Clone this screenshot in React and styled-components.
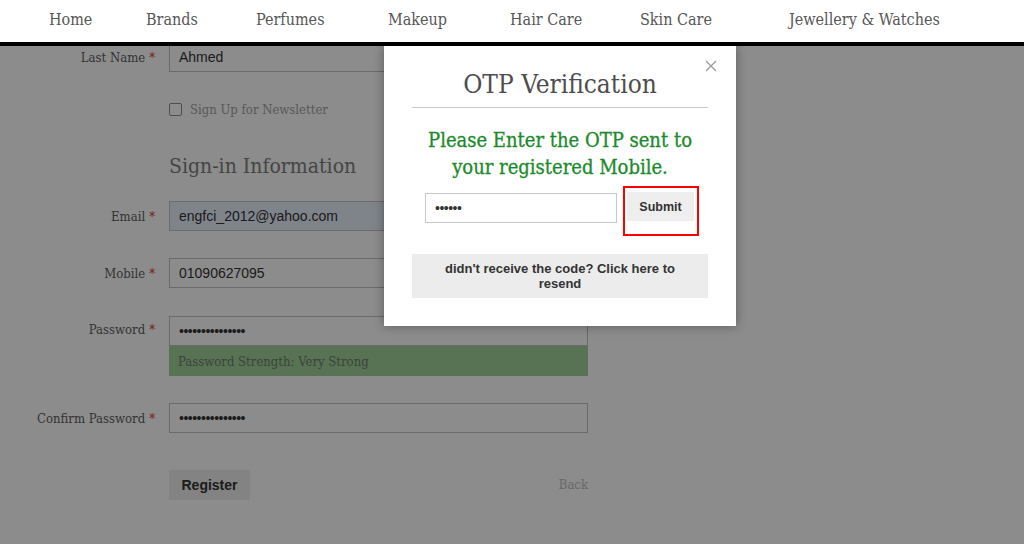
import React from "react";
import styled, { createGlobalStyle } from "styled-components";

const GlobalStyle = createGlobalStyle`
  html, body {
    margin: 0;
    padding: 0;
    background: #ffffff;
    overflow: hidden;
  }
  * {
    box-sizing: border-box;
  }
`;

const serif = `"DejaVu Serif Condensed", "DejaVu Serif", "Liberation Serif", serif`;
const sans = `"Liberation Sans", Arial, sans-serif`;

const Page = styled.div`
  position: relative;
  width: 1024px;
  height: 544px;
  overflow: hidden;
  background: #ffffff;
`;

const Header = styled.nav`
  position: relative;
  z-index: 3;
  height: 46px;
  background: #ffffff;
  border-bottom: 4px solid #000000;
  display: flex;
  align-items: center;
  padding: 0 0 4px 49px;
`;

const NavItem = styled.a`
  font-family: ${serif};
  font-size: 16px;
  color: #575757;
  text-decoration: none;
  flex: 0 0 ${props => (props.$w ? `${props.$w}px` : "auto")};
  white-space: nowrap;
`;

const Content = styled.div`
  margin-top: -4px;
`;

const Form = styled.div`
  display: grid;
  grid-template-columns: 155px 419px;
  column-gap: 14px;
  align-items: center;
`;

const Label = styled.label`
  font-family: ${serif};
  font-size: 13px;
  color: #5e5e5e;
  text-align: right;
  white-space: nowrap;
  margin-top: ${props => props.$mt || 0}px;
  span {
    color: #e02b27;
    margin-left: 4px;
  }
`;

const Field = styled.div`
  display: flex;
  flex-direction: column;
  margin-top: ${props => props.$mt || 0}px;
`;

const Input = styled.div`
  height: 30px;
  border: 1px solid #c2c2c2;
  background: ${props => (props.$autofill ? "#e8f0fe" : "#ffffff")};
  font-family: ${sans};
  font-size: 14px;
  color: #333333;
  display: flex;
  align-items: center;
  padding: 0 9px;
  letter-spacing: ${props => (props.$dots ? "-0.5px" : "0")};
`;

const Strength = styled.div`
  height: 30px;
  background: #a0d29a;
  font-family: ${serif};
  font-size: 13px;
  color: #6f7a6c;
  display: flex;
  align-items: center;
  padding: 0 9px;
`;

const Spacer = styled.div``;

const CheckRow = styled.div`
  display: flex;
  align-items: center;
  gap: 8px;
  margin-top: 24px;
  height: 26px;
  font-family: ${serif};
  font-size: 13px;
  color: #a3a3a3;
`;

const Box = styled.span`
  width: 13px;
  height: 13px;
  border: 1px solid #8f8f8f;
  border-radius: 2px;
  background: #ffffff;
`;

const Heading = styled.h2`
  margin: 31px 0 0;
  font-family: ${serif};
  font-weight: normal;
  font-size: 21px;
  line-height: 26px;
  color: #7e7e7e;
`;

const Actions = styled.div`
  margin-top: 37px;
  display: flex;
  align-items: center;
  justify-content: space-between;
`;

const RegisterButton = styled.button`
  width: 81px;
  height: 30px;
  border: none;
  background: #eeeeee;
  font-family: ${sans};
  font-weight: bold;
  font-size: 14px;
  color: #333333;
  padding: 0;
`;

const BackLink = styled.a`
  font-family: ${serif};
  font-size: 13px;
  color: #bdbdbd;
  margin-top: -2px;
`;

const Overlay = styled.div`
  position: absolute;
  top: 46px;
  left: 0;
  right: 0;
  bottom: 0;
  background: rgba(0, 0, 0, 0.45);
  z-index: 1;
`;

const Modal = styled.div`
  position: absolute;
  z-index: 2;
  top: 46px;
  left: 384px;
  width: 352px;
  background: #ffffff;
  box-shadow: 0 0 10px rgba(0, 0, 0, 0.35);
  padding: 22px 28px 28px;
  display: flex;
  flex-direction: column;
`;

const Close = styled.button`
  position: absolute;
  top: 13px;
  right: 16px;
  border: none;
  background: none;
  padding: 0;
  width: 16px;
  height: 16px;
  display: flex;
`;

const Title = styled.h1`
  margin: 0;
  padding-bottom: 7px;
  border-bottom: 1px solid #c9c9c9;
  text-align: center;
  font-family: ${serif};
  font-weight: normal;
  font-size: 26px;
  line-height: 32px;
  color: #4d4d4d;
`;

const Message = styled.p`
  margin: 19px 0 0;
  text-align: center;
  font-family: ${serif};
  font-size: 20px;
  line-height: 27px;
  color: #1c8a2c;
  -webkit-text-stroke: 0.3px #1c8a2c;
`;

const OtpRow = styled.div`
  display: flex;
  align-items: flex-start;
  margin-top: 5px;
  padding-left: 13px;
`;

const OtpInput = styled.div`
  width: 192px;
  height: 30px;
  margin-top: 7px;
  border: 1px solid #c8c8c8;
  font-family: ${sans};
  font-size: 14px;
  color: #333333;
  display: flex;
  align-items: center;
  padding: 0 9px;
  letter-spacing: -0.5px;
`;

const Highlight = styled.div`
  margin-left: 6px;
  border: 2px solid #ff0000;
  padding: 4px 3px 13px 2px;
`;

const SubmitButton = styled.button`
  width: 67px;
  height: 29px;
  border: none;
  background: #eeeeee;
  font-family: ${sans};
  font-weight: bold;
  font-size: 12.5px;
  color: #333333;
  padding: 0;
`;

const Resend = styled.div`
  margin-top: 18px;
  background: #ececec;
  padding: 7px 28px;
  text-align: center;
  font-family: ${sans};
  font-weight: bold;
  font-size: 13px;
  line-height: 15px;
  color: #333333;
`;

const navItems = [
  ["Home", 97],
  ["Brands", 110],
  ["Perfumes", 132],
  ["Makeup", 122],
  ["Hair Care", 130],
  ["Skin Care", 149],
  ["Jewellery & Watches", 0]
];

export default function App() {
  return (
    <Page>
      <GlobalStyle />
      <Header>
        {navItems.map(([name, w]) => (
          <NavItem key={name} $w={w}>
            {name}
          </NavItem>
        ))}
      </Header>

      <Content>
        <Form>
          <Label>
            Last Name<span>*</span>
          </Label>
          <Input>Ahmed</Input>

          <Spacer />
          <CheckRow>
            <Box />
            Sign Up for Newsletter
          </CheckRow>

          <Spacer />
          <Heading>Sign-in Information</Heading>

          <Label $mt={22}>
            Email<span>*</span>
          </Label>
          <Field $mt={22}>
            <Input $autofill>engfci_2012@yahoo.com</Input>
          </Field>

          <Label $mt={27}>
            Mobile<span>*</span>
          </Label>
          <Field $mt={27}>
            <Input>01090627095</Input>
          </Field>

          <Label $mt={28} style={{ alignSelf: "start", paddingTop: 6 }}>
            Password<span>*</span>
          </Label>
          <Field $mt={28}>
            <Input $dots>•••••••••••••••</Input>
            <Strength>Password Strength: Very Strong</Strength>
          </Field>

          <Label $mt={27}>
            Confirm Password<span>*</span>
          </Label>
          <Field $mt={27}>
            <Input $dots>•••••••••••••••</Input>
          </Field>

          <Spacer />
          <Actions>
            <RegisterButton>Register</RegisterButton>
            <BackLink>Back</BackLink>
          </Actions>
        </Form>
      </Content>

      <Overlay />

      <Modal>
        <Close aria-label="Close">
          <svg width="14" height="14" viewBox="0 0 14 14">
            <path d="M2 2 L12 12 M12 2 L2 12" stroke="#9a9a9a" strokeWidth="1.3" fill="none" />
          </svg>
        </Close>
        <Title>OTP Verification</Title>
        <Message>
          Please Enter the OTP sent to
          <br />
          your registered Mobile.
        </Message>
        <OtpRow>
          <OtpInput>••••••</OtpInput>
          <Highlight>
            <SubmitButton>Submit</SubmitButton>
          </Highlight>
        </OtpRow>
        <Resend>didn't receive the code? Click here to resend</Resend>
      </Modal>
    </Page>
  );
}
